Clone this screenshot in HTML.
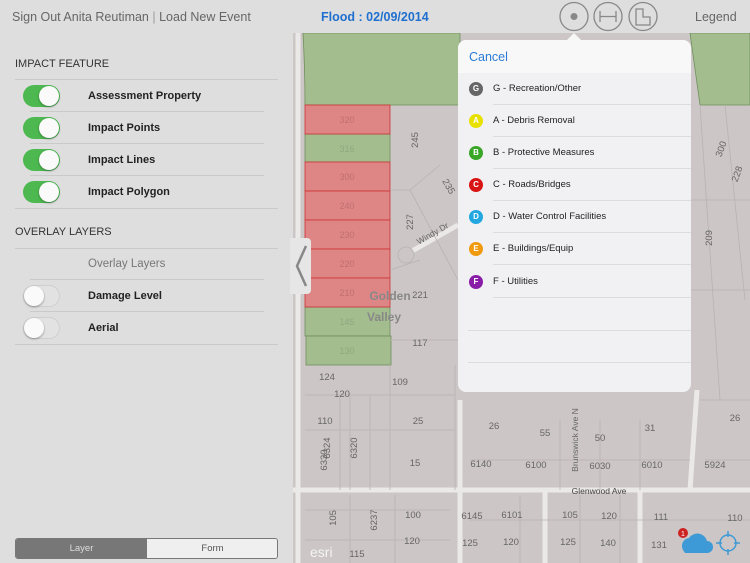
<!DOCTYPE html>
<html><head><style>
*{margin:0;padding:0;box-sizing:border-box}
body{width:750px;height:563px;overflow:hidden;background:#dedede;font-family:"Liberation Sans",sans-serif;position:relative}
.a{position:absolute}
.hdr{left:0;top:0;width:750px;height:33px;background:#dedede}
.sw{position:absolute;left:23px;width:37px;height:22px;border-radius:11px}
.sw.on{background:#4cb84f}
.sw.off{background:#e2e2e2;border:1px solid #cfcfcf}
.sw i{position:absolute;top:1px;width:20px;height:20px;border-radius:10px;background:#fafafa;box-shadow:0 1px 2px rgba(0,0,0,.35)}
.sw.on i{right:1px}.sw.off i{left:0;top:0}
.lbl{position:absolute;left:88px;font-size:11px;font-weight:bold;color:#222}
.line{position:absolute;height:1px;background:#cacaca}
.sec{position:absolute;left:15px;font-size:11px;color:#333}
.row{position:absolute;left:0;width:233px;height:32px;font-size:9.5px;color:#222}
.row b{position:absolute;left:11px;top:9px;width:14px;height:14px;border-radius:7px;color:#fff;font-size:8px;text-align:center;line-height:14px}
.row span{position:absolute;left:35px;top:10px}
.row:after{content:"";position:absolute;left:35px;right:0;bottom:0;height:1px;background:#dcdce0}
</style></head><body>
<div class="a hdr"></div>
<div class="a" style="left:12px;top:10px;font-size:12.5px;color:#666">Sign Out Anita Reutiman <span style="color:#999">|</span> Load New Event</div>
<div class="a" style="left:321px;top:10px;font-size:12.5px;color:#1f6fd0;font-weight:bold">Flood : 02/09/2014</div>
<div class="a" style="left:695px;top:10px;font-size:12.5px;color:#666">Legend</div>
<svg class="a" style="left:558px;top:1px" width="104" height="32" viewBox="0 0 104 32">
<g fill="none" stroke="#888" stroke-width="1.3"><circle cx="16" cy="15.5" r="14"/><circle cx="50" cy="15.5" r="14"/><circle cx="85" cy="15.5" r="14"/>
<path d="M42 10v11M58 10v11M42 15.5h16"/><path d="M78 8h7v8h7v8h-14z"/></g><circle cx="16" cy="15.5" r="3.5" fill="#888"/></svg>

<div class="sec" style="top:58px">IMPACT FEATURE</div>
<div class="line" style="left:15px;top:79px;width:263px"></div>
<div class="sw on" style="top:85px"><i></i></div><div class="lbl" style="top:90px">Assessment Property</div>
<div class="line" style="left:30px;top:111px;width:234px"></div>
<div class="sw on" style="top:117px"><i></i></div><div class="lbl" style="top:122px">Impact Points</div>
<div class="line" style="left:30px;top:143px;width:234px"></div>
<div class="sw on" style="top:149px"><i></i></div><div class="lbl" style="top:154px">Impact Lines</div>
<div class="line" style="left:30px;top:175px;width:234px"></div>
<div class="sw on" style="top:181px"><i></i></div><div class="lbl" style="top:186px">Impact Polygon</div>
<div class="line" style="left:15px;top:208px;width:263px"></div>
<div class="sec" style="top:226px">OVERLAY LAYERS</div>
<div class="line" style="left:15px;top:248px;width:263px"></div>
<div class="lbl" style="top:258px;font-weight:normal;color:#777;font-size:11.5px">Overlay Layers</div>
<div class="line" style="left:30px;top:279px;width:234px"></div>
<div class="sw off" style="top:285px"><i></i></div><div class="lbl" style="top:290px">Damage Level</div>
<div class="line" style="left:30px;top:311px;width:234px"></div>
<div class="sw off" style="top:317px"><i></i></div><div class="lbl" style="top:322px">Aerial</div>
<div class="line" style="left:15px;top:344px;width:263px"></div>
<div class="a" style="left:15px;top:538px;width:263px;height:21px;border:1px solid #777;border-radius:3px;overflow:hidden;font-size:9.5px">
<div class="a" style="left:0;top:0;width:131px;height:19px;background:#777;color:#ddd;text-align:center;line-height:19px">Layer</div>
<div class="a" style="left:131px;top:0;width:131px;height:19px;background:#efefef;color:#555;text-align:center;line-height:19px">Form</div></div>

<svg class="a" style="left:293px;top:33px" width="457" height="530" viewBox="293 33 457 530">
<rect x="293" y="33" width="457" height="530" fill="#cdc6c6"/>
<g fill="#a3bd8e" stroke="#6f8f5c" stroke-width=".8">
<path d="M303 33H460V105H305Q305 70 303 33z"/>
<path d="M690 33H750V105H700z"/>
<rect x="305" y="134" width="85" height="28"/>
<rect x="305" y="307" width="85" height="29"/>
<rect x="306" y="336" width="85" height="29"/>
</g>
<g fill="#de8686" stroke="#c33" stroke-width=".8">
<rect x="305" y="105" width="85" height="29"/>
<rect x="305" y="162" width="85" height="29"/>
<rect x="305" y="191" width="85" height="29"/>
<rect x="305" y="220" width="85" height="29"/>
<rect x="305" y="249" width="85" height="29"/>
<rect x="305" y="278" width="85" height="29"/>
</g>
<g font-size="9" fill="#c07070" text-anchor="middle"><text x="347" y="123">320</text><text x="347" y="180">300</text><text x="347" y="209">240</text><text x="347" y="238">230</text><text x="347" y="267">220</text><text x="347" y="296">210</text></g>
<g font-size="9" fill="#8fa880" text-anchor="middle"><text x="347" y="152">316</text><text x="347" y="325">145</text><text x="347" y="354">130</text></g>
<g fill="none" stroke="#ebe8e8" stroke-width="5"><path d="M293 490H750"/><path d="M460 400V563"/><path d="M545 490V563M640 490V563"/><path d="M298 33V563"/><path d="M697 390L690 490"/><path d="M405 255L458 225"/></g>
<circle cx="406" cy="255" r="8" fill="#cdc6c6" stroke="#b9b2b2" stroke-width=".8"/>
<g fill="none" stroke="#b9b2b2" stroke-width=".8">
<path d="M390 190H410L440 165M410 190L458 280M390 270L420 260M390 340H458"/>
<path d="M305 395H455M305 430H455M390 365V490M350 395V490M455 365V490M470 460H690M560 420V490M600 420V490M640 420V490M340 395V490M370 395V490"/>
<path d="M305 510H450M305 540H450M350 495V563M395 495V563M470 520H690M520 495V563M580 495V563M620 495V563M690 520H750M700 400H750M705 460H750"/>
<path d="M700 105L720 400M725 105L745 300M691 200H750M691 290H750"/>
</g>
<g font-size="9.5" fill="#666" text-anchor="middle">
<text x="390" y="300" font-size="12" font-weight="bold" fill="#888">Golden</text><text x="384" y="321" font-size="12" font-weight="bold" fill="#888">Valley</text>
<text x="420" y="298">221</text><text x="420" y="346">117</text><text x="327" y="380">124</text><text x="342" y="397">120</text><text x="400" y="385">109</text>
<text x="325" y="424">110</text><text x="418" y="424">25</text><text x="415" y="466">15</text><text x="481" y="467">6140</text><text x="536" y="468">6100</text><text x="600" y="469">6030</text><text x="652" y="468">6010</text><text x="715" y="468">5924</text>
<text x="494" y="429">26</text><text x="545" y="436">55</text><text x="600" y="441">50</text><text x="650" y="431">31</text><text x="735" y="421">26</text>
<text x="599" y="494" font-size="8.5" fill="#444">Glenwood Ave</text>
<text x="413" y="518">100</text><text x="412" y="544">120</text><text x="472" y="519">6145</text><text x="512" y="518">6101</text><text x="470" y="546">125</text><text x="511" y="545">120</text>
<text x="570" y="518">105</text><text x="609" y="519">120</text><text x="568" y="545">125</text><text x="608" y="546">140</text><text x="661" y="520">111</text><text x="659" y="548">131</text><text x="735" y="521">110</text><text x="357" y="557">115</text>
<text transform="translate(418,140) rotate(-90)">245</text><text transform="translate(413,222) rotate(-90)">227</text><text transform="translate(446,188) rotate(60)">235</text>
<text transform="translate(724,150) rotate(-70)">300</text><text transform="translate(740,175) rotate(-70)">228</text><text transform="translate(712,238) rotate(-90)">209</text>
<text transform="translate(434,236) rotate(-30)" font-size="8.5">Windy Dr</text>
<text transform="translate(330,448) rotate(-90)">6324</text><text transform="translate(357,448) rotate(-90)">6320</text><text transform="translate(327,460) rotate(-90)">6330</text>
<text transform="translate(336,518) rotate(-90)">105</text><text transform="translate(377,520) rotate(-90)">6237</text>
<text transform="translate(578,440) rotate(-90)" font-size="8.5">Brunswick Ave N</text>
</g>
<text x="310" y="557" font-size="14" fill="#f4f4f4">esri</text>
<path d="M683 550a8 8 0 0 1 6-12a10 10 0 0 1 18 3a6 6 0 0 1 0 12h-22z" fill="#3e9ad6"/>
<circle cx="683" cy="533" r="5" fill="#c22"/><text x="683" y="536" font-size="7" fill="#fff" text-anchor="middle">1</text>
<g fill="none" stroke="#3e9ad6" stroke-width="1.5"><circle cx="728" cy="543" r="8"/><path d="M728 531v6M728 549v6M716 543h6M734 543h6"/></g>
</svg>
<div class="a" style="left:290px;top:238px;width:21px;height:56px;background:#e6e6e6;border-radius:0 4px 4px 0"></div>
<svg class="a" style="left:293px;top:244px" width="16" height="44"><path d="M13 2L4 22L13 42" fill="none" stroke="#888" stroke-width="2.5"/></svg>

<div class="a" style="left:566px;top:33px;width:0;height:0;border-left:8px solid transparent;border-right:8px solid transparent;border-bottom:8px solid #f7f7f7"></div>
<div class="a" style="left:458px;top:40px;width:233px;height:352px;background:#f1f1f4;border-radius:8px;overflow:hidden">
<div class="a" style="left:0;top:0;width:233px;height:33px;background:#f8f8f8"></div>
<div class="a" style="left:11px;top:10px;font-size:12.5px;color:#2b7bd6">Cancel</div>
<div class="row" style="top:33px"><b style="background:#666">G</b><span>G - Recreation/Other</span></div>
<div class="row" style="top:65px"><b style="background:#e8e000">A</b><span>A - Debris Removal</span></div>
<div class="row" style="top:97px"><b style="background:#3aa628">B</b><span>B - Protective Measures</span></div>
<div class="row" style="top:129px"><b style="background:#d81414">C</b><span>C - Roads/Bridges</span></div>
<div class="row" style="top:161px"><b style="background:#22a7e0">D</b><span>D - Water Control Facilities</span></div>
<div class="row" style="top:193px"><b style="background:#f09a10">E</b><span>E - Buildings/Equip</span></div>
<div class="row" style="top:226px"><b style="background:#8a1da8">F</b><span>F - Utilities</span></div>
<div class="line" style="left:10px;top:290px;width:223px;background:#dcdce0"></div>
<div class="line" style="left:10px;top:322px;width:223px;background:#dcdce0"></div>
</div>
</body></html>
